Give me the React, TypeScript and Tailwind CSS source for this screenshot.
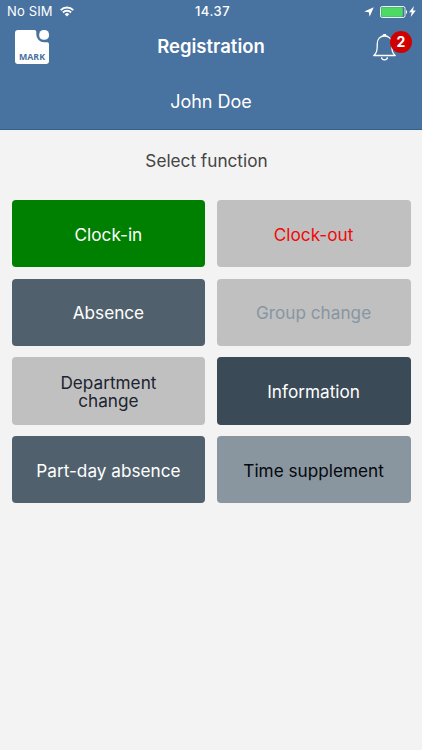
const functions = [
  { id: 1, label: "Clock-in", style: "bg-[#008000] text-white" },
  { id: 2, label: "Clock-out", style: "bg-[#c0c0c0] text-[#f00808]" },
  { id: 3, label: "Absence", style: "bg-[#50616d] text-white" },
  { id: 4, label: "Group change", style: "bg-[#c0c0c0] text-[#8896a2]" },
  { id: 5, label: "Department change", style: "bg-[#c0c0c0] text-[#1c2430]" },
  { id: 6, label: "Information", style: "bg-[#3a4a57] text-white" },
  { id: 7, label: "Part-day absence", style: "bg-[#50616d] text-white" },
  { id: 8, label: "Time supplement", style: "bg-[#8996a0] text-[#05080c]" },
]

function StatusBar() {
  return (
    <div className="grid h-[23px] grid-cols-3 items-center pr-[6px] pl-[7px] text-[13px]">
      <div className="flex items-center gap-[7px]">
        <span className="tracking-[0.15px]">No SIM</span>
        <svg width="14" height="11" viewBox="0 0 14 11" fill="none" stroke="white" strokeWidth="1.9">
          <path d="M0.7 4.1a9 9 0 0 1 12.6 0" />
          <path d="M2.9 6.5a5.8 5.8 0 0 1 8.2 0" />
          <path d="M7 10.6 4.7 8.2a3.3 3.3 0 0 1 4.6 0z" fill="white" stroke="none" />
        </svg>
      </div>
      <span className="pl-[2px] text-center font-medium tracking-[0.5px]">14.37</span>
      <div className="flex items-center justify-end">
        <svg width="10" height="10" viewBox="0 0 10 10" fill="white">
          <path d="M9.8 0.2 5.6 9.8 4.8 5.2 0.2 4.6z" />
        </svg>
        <svg className="ml-[6px]" width="28" height="12" viewBox="0 0 28 12">
          <rect x="0.5" y="0.5" width="24.5" height="11" rx="1.8" fill="none" stroke="white" strokeWidth="0.9" />
          <rect x="1.3" y="1.3" width="21.5" height="9.4" rx="0.8" fill="#4cd964" />
          <path d="M26 4c1.6 0.6 1.6 3.4 0 4z" fill="white" />
        </svg>
        <svg className="ml-[1px]" width="7" height="11" viewBox="0 0 7 11" fill="white">
          <path d="M4.9 0 0.1 6.2h2.6L1.7 11l5.1-6.4H4z" />
        </svg>
      </div>
    </div>
  )
}

function Logo() {
  return (
    <svg width="34" height="34" viewBox="0 0 34 34">
      <path
        d="M3 0H19.5Q21.3 0 21.3 1.8V4.5A7.8 7.8 0 0 0 29.1 12.3H32.2Q34 12.3 34 14.1V31Q34 34 31 34H3Q0 34 0 31V3Q0 0 3 0z"
        fill="white"
      />
      <rect x="24.2" y="0" width="9.8" height="9.8" rx="4.4" fill="white" />
      <text
        x="4"
        y="29.6"
        textLength="26"
        lengthAdjust="spacingAndGlyphs"
        className="fill-[#4a72a0] font-['Open_Sans','Inter',sans-serif] text-[9.6px] font-bold"
      >
        MARK
      </text>
    </svg>
  )
}

function Bell() {
  return (
    <div className="relative h-[26px] w-[23px]">
      <svg width="23" height="27" viewBox="0 0 23 27" fill="none" stroke="white" strokeWidth="1.3">
        <path d="M11.5 2C7 2 4.3 5.2 4.3 9.6C4.3 16.5 3.8 18.8 0.8 21.5H22.2C19.2 18.8 18.7 16.5 18.7 9.6C18.7 5.2 16 2 11.5 2z" strokeLinejoin="round" />
        <path d="M10 1.8a1.5 1.3 0 0 1 3 0" fill="white" />
        <path d="M8.6 23.3a2.9 2.5 0 0 0 5.8 0" />
      </svg>
      <span className="absolute -top-[3px] left-[17px] flex size-[22px] items-center justify-center rounded-full bg-[#d10000] pb-px text-[14px] font-bold">
        2
      </span>
    </div>
  )
}

function App() {
  return (
    <div className="min-h-screen bg-[#f3f3f3] font-['Inter','Liberation_Sans',sans-serif]">
      <header className="h-[130px] border-b border-[#34608c] bg-[#48729f] text-white">
        <StatusBar />
        <div className="grid h-[48px] grid-cols-[34px_1fr_34px] items-center px-[15px]">
          <Logo />
          <h1 className="text-center text-[18.5px] font-semibold">Registration</h1>
          <Bell />
        </div>
        <p className="pt-[18px] text-center text-[18px] leading-[26px]">John Doe</p>
      </header>
      <main className="px-[11.5px]">
        <h2 className="pt-[18px] pr-[9px] text-center text-[17.2px] leading-[26px] text-[#444]">Select function</h2>
        <div className="mt-[26px] grid auto-rows-[67.4px] grid-cols-2 gap-[11.3px]">
          {functions.map((item) => (
            <button
              key={item.id}
              className={`rounded-[4px] px-5 pt-[2px] text-[17.2px] leading-[18px] ${item.style}`}
            >
              {item.label}
            </button>
          ))}
        </div>
      </main>
    </div>
  )
}

export default App
